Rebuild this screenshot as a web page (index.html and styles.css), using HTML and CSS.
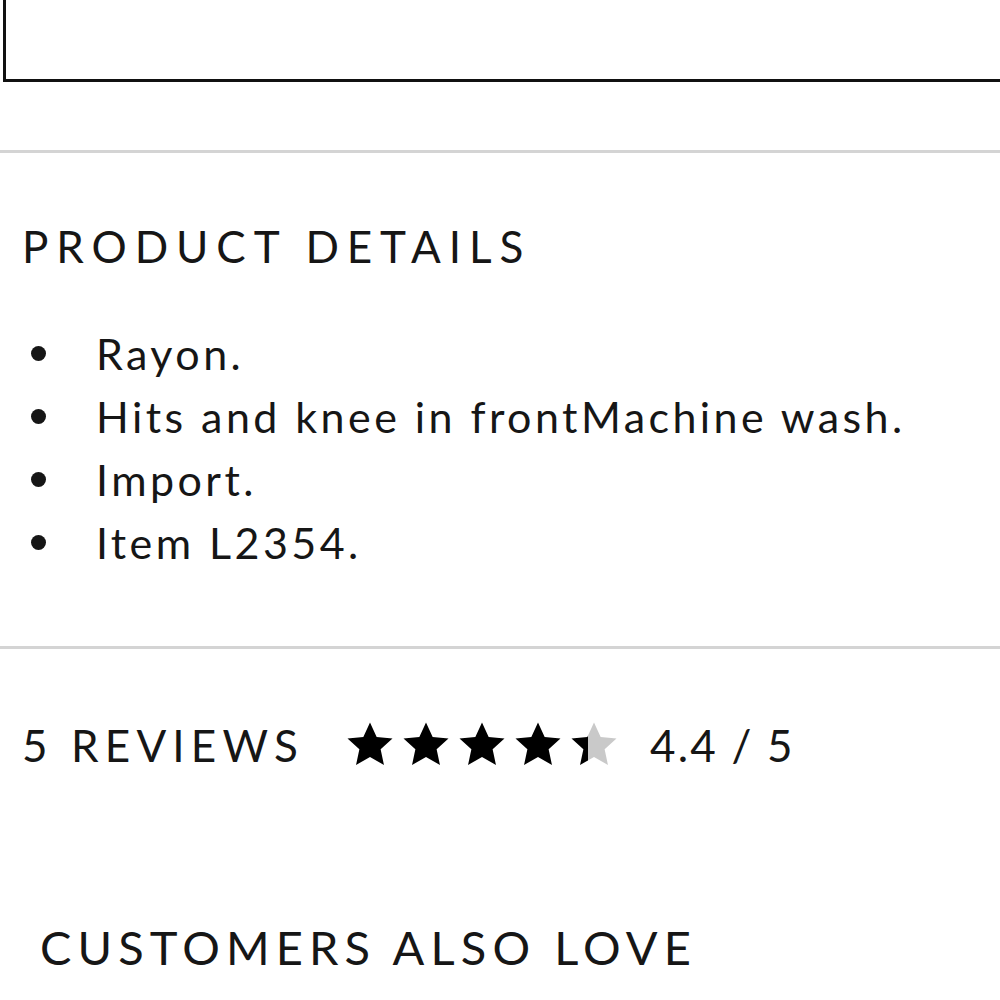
FILE: index.html
```html
<!DOCTYPE html>
<html lang="en">
<head>
    <meta charset="UTF-8">
    <meta name="viewport" content="width=device-width, initial-scale=1.0">
    <title>Product - Details</title>
    <link rel="stylesheet" href="styles.css">
</head>
<body>

    <div class="page">
        <!-- bottom of the outlined add-to-bag button -->
        <div class="bag-button"></div>

        <div class="details-section">
            <h3 class="section-title">Product Details</h3>
            <ul class="details-list">
                <li>Rayon.</li>
                <li>Hits and knee in frontMachine wash.</li>
                <li>Import.</li>
                <li>Item L2354.</li>
            </ul>
        </div>

        <div class="reviews-row">
            <span class="reviews-count">5 Reviews</span>
            <div class="stars">
                <svg class="star" viewBox="0 0 24 24"><polygon points="12,1.2 15.2,8.1 22.8,8.9 17.1,14 18.7,21.6 12,17.7 5.3,21.6 6.9,14 1.2,8.9 8.8,8.1"/></svg>
                <svg class="star" viewBox="0 0 24 24"><polygon points="12,1.2 15.2,8.1 22.8,8.9 17.1,14 18.7,21.6 12,17.7 5.3,21.6 6.9,14 1.2,8.9 8.8,8.1"/></svg>
                <svg class="star" viewBox="0 0 24 24"><polygon points="12,1.2 15.2,8.1 22.8,8.9 17.1,14 18.7,21.6 12,17.7 5.3,21.6 6.9,14 1.2,8.9 8.8,8.1"/></svg>
                <svg class="star" viewBox="0 0 24 24"><polygon points="12,1.2 15.2,8.1 22.8,8.9 17.1,14 18.7,21.6 12,17.7 5.3,21.6 6.9,14 1.2,8.9 8.8,8.1"/></svg>
                <svg class="star" viewBox="0 0 24 24">
                    <defs>
                        <linearGradient id="star-part" x1="0" x2="1" y1="0" y2="0">
                            <stop offset="0.36" stop-color="#000"/>
                            <stop offset="0.36" stop-color="#c9c9c9"/>
                        </linearGradient>
                    </defs>
                    <polygon fill="url(#star-part)" points="12,1.2 15.2,8.1 22.8,8.9 17.1,14 18.7,21.6 12,17.7 5.3,21.6 6.9,14 1.2,8.9 8.8,8.1"/>
                </svg>
            </div>
            <span class="rating-score">4.4 / 5</span>
        </div>

        <h3 class="section-title also-love">Customers Also Love</h3>
    </div>

</body>
</html>
```

FILE: styles.css
```css
/* product page - details, reviews and recommendations */

:root {
    --text-color: #161616;
    --divider-color: #d4d4d4;
    --star-color: #000000;
}

body {
    margin: 0;
    font-family: 'Lato', 'Noto Sans', sans-serif;
    color: var(--text-color);
    background-color: #ffffff;
}

.page {
    overflow: hidden; /* button runs past the right edge */
}

/* --- Add to bag button (only the bottom shows) --- */
.bag-button {
    height: 102px;
    margin: -20px -20px 0 3px;
    border: 3px solid #111111;
    box-sizing: border-box;
}

/* --- Section headings --- */
.section-title {
    margin: 0;
    font-size: 44px;
    font-weight: 400;
    letter-spacing: 0.18em;
    text-transform: uppercase;
    line-height: 1.2;
}

/* --- Product details --- */
.details-section {
    margin-top: 68px;
    padding: 67px 0 72px 22px;
    border-top: 3px solid var(--divider-color);
    border-bottom: 3px solid var(--divider-color);
}

.details-list {
    list-style: none;
    margin: 49px 0 0;
    padding: 0;
    font-size: 43px;
    letter-spacing: 0.08em;
    line-height: 63px;
}

.details-list li {
    display: flex;
    align-items: center;
}

.details-list li::before {
    content: "";
    width: 15px;
    height: 15px;
    border-radius: 50%;
    background-color: var(--text-color);
    margin: 0 50px 0 9px;
    flex-shrink: 0;
}

/* --- Reviews summary --- */
.reviews-row {
    display: flex;
    align-items: center;
    padding: 70px 0 0 22px;
}

.reviews-count {
    font-size: 44px;
    letter-spacing: 0.14em;
    text-transform: uppercase;
    margin-right: 41px;
}

.stars {
    display: flex;
    gap: 6px;
}

.star {
    width: 50px;
    height: 50px;
    fill: var(--star-color);
}

.rating-score {
    font-size: 44px;
    letter-spacing: 0.05em;
    margin-left: 31px;
}

/* --- Recommendations heading --- */
.also-love {
    margin: 148px 0 0 40px;
    font-size: 47px;
    letter-spacing: 0.13em;
}
```
